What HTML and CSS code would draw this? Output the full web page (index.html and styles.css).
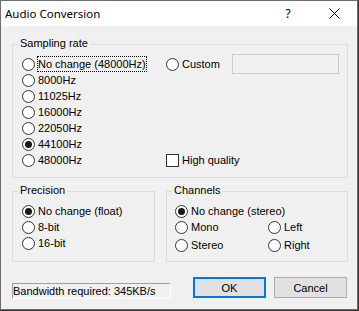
FILE: index.html
```html
<!DOCTYPE html>
<html lang="en">
<head>
    <meta charset="UTF-8">
    <meta name="viewport" content="width=device-width, initial-scale=1.0">
    <title>Audio Conversion</title>
    <link rel="stylesheet" href="styles.css">
</head>
<body>

    <div class="window">

        <!-- Title bar -->
        <div class="titlebar">
            <span class="title">Audio Conversion</span>
            <span class="caption-btn">?</span>
            <span class="caption-btn">
                <svg width="11" height="11" viewBox="0 0 11 11"><path d="M0.5 0.5L10.5 10.5M10.5 0.5L0.5 10.5" stroke="#000" stroke-width="1" fill="none"/></svg>
            </span>
        </div>

        <div class="client">

            <!-- Sampling rate -->
            <div class="group sampling">
                <span class="group-title">Sampling rate</span>
                <div class="rates">
                    <label class="radio"><span class="dot"></span><span class="text focus">No change (48000Hz)</span></label>
                    <label class="radio"><span class="dot"></span><span class="text">8000Hz</span></label>
                    <label class="radio"><span class="dot"></span><span class="text">11025Hz</span></label>
                    <label class="radio"><span class="dot"></span><span class="text">16000Hz</span></label>
                    <label class="radio"><span class="dot"></span><span class="text">22050Hz</span></label>
                    <label class="radio"><span class="dot checked"></span><span class="text">44100Hz</span></label>
                    <label class="radio"><span class="dot"></span><span class="text">48000Hz</span></label>
                </div>
                <div class="extra">
                    <div class="radio custom-row">
                        <span class="dot"></span><span class="text">Custom</span>
                        <span class="textbox"></span>
                    </div>
                    <label class="radio"><span class="box"></span><span class="text">High quality</span></label>
                </div>
            </div>

            <div class="bottom-groups">
                <!-- Precision -->
                <div class="group precision">
                    <span class="group-title">Precision</span>
                    <label class="radio"><span class="dot checked"></span><span class="text">No change (float)</span></label>
                    <label class="radio"><span class="dot"></span><span class="text">8-bit</span></label>
                    <label class="radio"><span class="dot"></span><span class="text">16-bit</span></label>
                </div>

                <!-- Channels -->
                <div class="group channels">
                    <span class="group-title">Channels</span>
                    <label class="radio wide"><span class="dot checked"></span><span class="text">No change (stereo)</span></label>
                    <label class="radio"><span class="dot"></span><span class="text">Mono</span></label>
                    <label class="radio"><span class="dot"></span><span class="text">Left</span></label>
                    <label class="radio"><span class="dot"></span><span class="text">Stereo</span></label>
                    <label class="radio"><span class="dot"></span><span class="text">Right</span></label>
                </div>
            </div>

            <!-- Status + buttons -->
            <div class="footer">
                <div class="bandwidth">Bandwidth required: 345KB/s</div>
                <div class="buttons">
                    <button class="btn default">OK</button>
                    <button class="btn">Cancel</button>
                </div>
            </div>

        </div>
    </div>

</body>
</html>
```

FILE: styles.css
```css
body {
    margin: 0;
    background: #3b3431;
    font-family: "Liberation Sans", Arial, sans-serif;
    font-size: 11px;
    color: #000;
}

.window {
    width: 358px;
    height: 310px;
    box-sizing: border-box;
    border: 1px solid #6d6d6d;
    background: #f0f0f0;
}

.titlebar {
    display: flex;
    align-items: center;
    height: 25px;
    background: #fff;
}

.title {
    flex: 1;
    padding-left: 4px;
    font-family: "Noto Sans", sans-serif;
    font-size: 11.5px;
}

.caption-btn {
    width: 46px;
    height: 25px;
    display: flex;
    align-items: center;
    justify-content: center;
    font-family: "Noto Sans", sans-serif;
    font-size: 12px;
}

.client {
    padding: 18px 9px 0 11px;
}

.group {
    position: relative;
    border: 1px solid #dcdcdc;
    box-sizing: border-box;
}

.group-title {
    position: absolute;
    top: -8px;
    left: 5px;
    padding: 0 2px;
    line-height: 13px;
    background: #f0f0f0;
}

.sampling {
    display: grid;
    grid-template-columns: 144px 1fr;
    height: 134px;
    padding: 11px 8px 9px 9px;
}

.extra {
    display: flex;
    flex-direction: column;
    justify-content: space-between;
}

.radio {
    display: flex;
    align-items: center;
    height: 16px;
    white-space: nowrap;
}

.dot,
.box {
    width: 13px;
    height: 13px;
    box-sizing: border-box;
    border: 1px solid #333;
    background: #fff;
    flex-shrink: 0;
}

.dot {
    border-radius: 50%;
    display: flex;
    align-items: center;
    justify-content: center;
}

.dot.checked::after {
    content: "";
    width: 7px;
    height: 7px;
    border-radius: 50%;
    background: #1a1a1a;
}

.text {
    margin-left: 3px;
    line-height: 14px;
}

.focus {
    outline: 1px dotted #000;
}

.textbox {
    margin-left: auto;
    width: 107px;
    height: 20px;
    flex-shrink: 0;
    box-sizing: border-box;
    border: 1px solid #ccc;
    background: #f0f0f0;
}

.bottom-groups {
    display: flex;
    gap: 11px;
    margin-top: 13px;
}

.precision {
    width: 143px;
    height: 71px;
    padding: 11px 8px 10px 9px;
}

.channels {
    flex: 1;
    height: 71px;
    padding: 11px 8px 7px 8px;
    display: grid;
    grid-template-columns: 93px 1fr;
    grid-template-rows: 16px 16px 18px;
    align-items: end;
}

.channels .wide {
    grid-column: 1 / 3;
}

.footer {
    display: flex;
    align-items: flex-start;
    margin-top: 15px;
}

.bandwidth {
    width: 159px;
    height: 16px;
    box-sizing: border-box;
    margin-top: 6px;
    border-top: 1px solid #a0a0a0;
    border-left: 1px solid #a0a0a0;
    border-bottom: 1px solid #fff;
    border-right: 1px solid #fff;
    line-height: 14px;
    white-space: nowrap;
}

.buttons {
    display: flex;
    gap: 8px;
    margin-left: 22px;
}

.btn {
    width: 73px;
    height: 21px;
    padding: 0;
    border: 1px solid #adadad;
    background: #e1e1e1;
    font-family: "Liberation Sans", Arial, sans-serif;
    font-size: 11px;
    color: #000;
}

.btn.default {
    border: 2px solid #0078d7;
}
```
